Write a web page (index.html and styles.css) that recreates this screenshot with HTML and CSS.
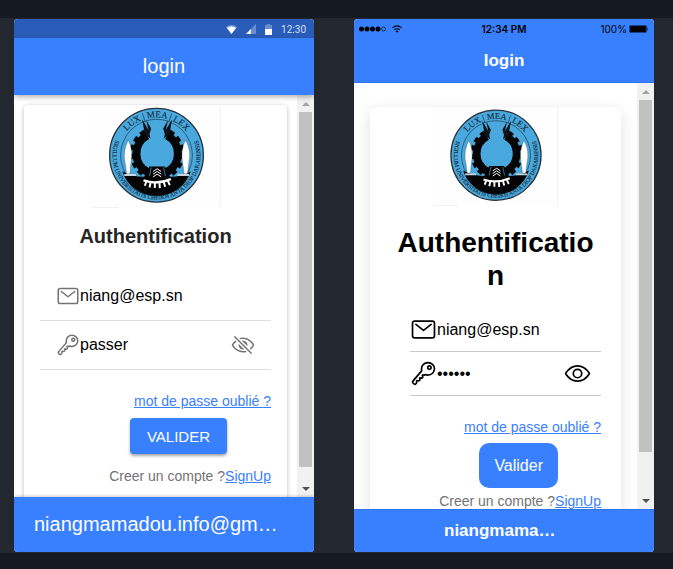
FILE: index.html
```html
<!DOCTYPE html>
<html lang="fr">
<head>
<meta charset="utf-8">
<meta name="viewport" content="width=device-width, initial-scale=1">
<title>login</title>
<link rel="stylesheet" href="styles.css">
</head>
<body>
<svg class="defs" aria-hidden="true">
  <defs>
    <path id="arc-top" d="M112 181A115 115 0 0 1 342 181"/>
    <path id="arc-bottom" d="M108 124A132 132 0 1 0 346 124"/>
    <symbol id="seal" viewBox="30 30 391 308">
      <rect x="30" y="30" width="391" height="308" fill="#fefefe"/>
      <path d="M420 30V337M30 337H110" fill="none" stroke="#f0f0f0" stroke-width="3"/>
      <circle cx="227" cy="180" r="141" fill="#49a9de" stroke="#26323c" stroke-width="4"/>
      <circle cx="227" cy="180" r="108" fill="#49a9de" stroke="#1d3442" stroke-width="2"/>
      <path d="M124 228Q150 244 190 245L206 214H252L268 245Q306 244 330 228A108 108 0 0 1 124 228Z" fill="#050505"/>
      <path d="M211 217L206 243M248 217L254 243" fill="none" stroke="#49a9de" stroke-width="2"/>
      <path d="M199 121A62 62 0 0 0 201 231M259 121A62 62 0 0 1 257 231" fill="none" stroke="#050505" stroke-width="24"/>
      <path d="M192 109A76 76 0 0 0 195 243M266 109A76 76 0 0 1 263 243" fill="none" stroke="#050505" stroke-width="13" stroke-dasharray="16 11"/>
      <path d="M184 72L203 104L209 130L192 118ZM196 74L211 100L206 117ZM274 72L255 104L249 130L266 118ZM262 74L247 100L252 117Z" fill="#101418"/>
      <path d="M142 134Q124 170 133 205L137 236H147L150 205Q158 165 142 134ZM314 134Q298 170 306 205L310 236H320L324 205Q333 165 314 134Z" fill="#fff" stroke="#35414a" stroke-width="1"/>
      <path d="M130 240H165M290 240H325" stroke="#c8d5da" stroke-width="6"/>
      <path d="M217 229L229 221L241 229M217 237L229 229L241 237M217 245L229 237L241 245" fill="none" stroke="#fff" stroke-width="3"/>
      <path d="M188 256Q229 270 270 252" fill="none" stroke="#fff" stroke-width="7"/>
      <path d="M196 260L192 272M209 264L206 277M222 264V279M236 264L237 279M249 261L253 275M261 257L267 270" stroke="#fff" stroke-width="6"/>
      <g fill="#13293a" stroke="#13293a" stroke-width=".4" font-family="Liberation Serif, serif">
        <text font-size="27" text-anchor="middle"><textPath href="#arc-top" startOffset="50%">LUX | MEA | LEX</textPath></text>
        <text font-size="18" text-anchor="middle"><textPath href="#arc-bottom" startOffset="50%">SIGILLUM UNIVERSITATIS CHEIKH ANTA DIOP DAKARENSIS</textPath></text>
      </g>
    </symbol>
    <symbol id="mail" viewBox="0 0 512 512">
      <g fill="none" stroke="currentColor" stroke-width="32" stroke-linecap="round" stroke-linejoin="round"><rect x="48" y="96" width="416" height="320" rx="40"/><path d="M112 160L256 272L400 160"/></g>
    </symbol>
    <symbol id="key" viewBox="0 0 512 512">
      <path fill="none" stroke="currentColor" stroke-width="32" stroke-linecap="round" stroke-linejoin="round" d="M218.1 167.17c0 13 0 25.6 4.1 37.4-43.1 50.6-156.9 184.3-167.5 194.5a20.17 20.17 0 00-6.7 15c0 8.5 5.2 16.7 9.6 21.3 6.6 6.9 34.8 33 40 28 15.4-15 18.5-19 24.8-25.2 9.5-9.3-1-28.3 2.3-36s6.8-9.2 12.5-10.4 15.8 2.9 23.7 3c8.3.1 12.8-3.4 19-9.2 5-4.6 8.6-8.9 8.7-15.6.2-9-12.8-20.9-3.1-30.4s23.7 6.2 34 5 22.8-15.5 24.1-21.6-11.7-21.8-9.7-30.7c.7-3 6.8-10 11.4-11s25 6.9 29.6 5.9c5.6-1.2 12.1-7.1 17.4-10.4 15.5 6.7 29.6 9.4 47.7 9.4 68.5 0 124-53.4 124-119.2S408.5 48 340 48s-121.9 53.37-121.9 119.17zM400 144a32 32 0 11-32-32 32 32 0 0132 32z"/>
    </symbol>
    <symbol id="eye" viewBox="0 0 512 512">
      <g fill="none" stroke="currentColor" stroke-width="32"><path d="M255.66 112c-77.94 0-157.89 45.11-220.83 135.33a16 16 0 00-.27 17.77C82.92 340.8 161.8 400 255.66 400c92.84 0 173.34-59.38 221.79-135.25a16.14 16.14 0 000-17.47C428.89 172.28 347.8 112 255.66 112z"/><circle cx="256" cy="256" r="80"/></g>
    </symbol>
    <symbol id="eye-off" viewBox="0 0 512 512">
      <path fill="currentColor" d="M432 448a15.92 15.92 0 01-11.31-4.69l-352-352a16 16 0 0122.62-22.62l352 352A16 16 0 01432 448zM255.66 384c-41.49 0-81.5-12.28-118.92-36.5-34.07-22-64.74-53.51-88.7-91v-.08c19.94-28.57 41.78-52.73 65.24-72.21a2 2 0 00.14-2.94L93.5 161.38a2 2 0 00-2.71-.12c-24.92 21-48.05 46.76-69.08 76.92a31.92 31.92 0 00-.64 35.54c26.41 41.33 60.4 76.14 98.28 100.65C162 402 207.9 416 255.66 416a239.13 239.13 0 0075.8-12.58 2 2 0 00.77-3.31l-21.58-21.58a4 4 0 00-3.83-1 204.8 204.8 0 01-51.16 6.47zM490.84 238.6c-26.46-40.92-60.79-75.68-99.27-100.53C349 110.55 302 96 255.66 96a227.34 227.34 0 00-74.89 12.83 2 2 0 00-.75 3.31l21.55 21.55a4 4 0 003.88 1 192.82 192.82 0 0150.21-6.69c40.69 0 80.58 12.43 118.55 37 34.71 22.4 65.74 53.88 89.76 91a.13.13 0 010 .16 310.72 310.72 0 01-64.12 72.73 2 2 0 00-.15 2.95l19.9 19.89a2 2 0 002.7.13 343.49 343.49 0 0068.64-78.48 32.2 32.2 0 00-.1-34.78zM256 160a95.88 95.88 0 00-21.37 2.4 2 2 0 00-1 3.38l112.59 112.56a2 2 0 003.38-1A96 96 0 00256 160zM165.78 233.66a2 2 0 00-3.38 1 96 96 0 00115 115 2 2 0 001-3.38z"/>
    </symbol>
  </defs>
</svg>

<main class="stage">
  <section class="phone android">
    <div class="status">
      <svg width="11" height="9" viewBox="0 0 11 9"><path d="M0 2Q5.5-2 11 2L5.500 9Z" fill="#fff" opacity=".4"/><path d="M1 3Q5.500 0 10 3L5.500 9Z" fill="#fff"/></svg>
      <svg width="10" height="10" viewBox="0 0 10 10"><path d="M0 10L10 0V10Z" fill="#fff" opacity=".3"/><path d="M0 10L5 5V10Z" fill="#fff"/></svg>
      <svg width="7" height="11" viewBox="0 0 7 11"><path d="M0 1H2V0H5V1H7V5H0Z" fill="#fff" opacity=".3"/><path d="M0 5H7V11H0Z" fill="#fff"/></svg>
      <span>12:30</span>
    </div>
    <header class="bar"><h1>login</h1></header>
    <div class="content">
      <div class="page">
        <form class="card">
          <svg class="seal" role="img" aria-label="Logo"><use href="#seal"/></svg>
          <h2>Authentification</h2>
          <div class="item">
            <label for="mail-a"><svg class="icon"><use href="#mail"/></svg></label>
            <input id="mail-a" type="text" aria-label="Email" value="niang@esp.sn">
          </div>
          <div class="item">
            <label for="pass-a"><svg class="icon"><use href="#key"/></svg></label>
            <input id="pass-a" type="text" aria-label="Mot de passe" value="passer">
            <button class="toggle" type="button" aria-label="Masquer"><svg class="icon"><use href="#eye-off"/></svg></button>
          </div>
          <p class="forgot"><a href="#">mot de passe oublié ?</a></p>
          <button class="submit" type="button">VALIDER</button>
          <p class="signup">Creer un compte ?<a href="#">SignUp</a></p>
        </form>
      </div>
      <div class="scroll" aria-hidden="true"><i class="up"></i><b></b><i class="down"></i></div>
    </div>
    <footer class="foot"><span>niangmamadou.info@gm…</span></footer>
  </section>

  <section class="phone ios">
    <div class="status">
      <div class="signal">
        <svg width="27" height="6" viewBox="0 0 27 6"><g fill="#000"><circle cx="2.500" cy="3" r="2.500"/><circle cx="8" cy="3" r="2.500"/><circle cx="13.500" cy="3" r="2.500"/><circle cx="19" cy="3" r="2.500"/></g><circle cx="24.500" cy="3" r="2" fill="none" stroke="#000" stroke-width=".6"/></svg>
        <svg width="10" height="8" viewBox="0 0 10 8"><g fill="none" stroke="#000" stroke-width="1.100"><path d="M.5 2.800Q5-1 9.500 2.800"/><path d="M2.300 4.800Q5 2.600 7.700 4.800"/></g><path d="M3.500 6Q5 5 6.500 6L5 7.700Z"/></svg>
      </div>
      <strong>12:34 PM</strong>
      <div class="power"><span>100%</span><svg width="20" height="8" viewBox="0 0 20 8"><rect x=".3" y=".3" width="17.400" height="7.400" rx="2" fill="none" stroke="#000" stroke-width=".6"/><rect x="1" y="1" width="16" height="6" rx="1"/><path d="M18.500 2.500Q20 4 18.500 5.500Z"/></svg></div>
    </div>
    <header class="bar"><h1>login</h1></header>
    <div class="content">
      <div class="page">
        <form class="card">
          <svg class="seal" role="img" aria-label="Logo"><use href="#seal"/></svg>
          <h2>Authentification</h2>
          <div class="item">
            <label for="mail-i"><svg class="icon"><use href="#mail"/></svg></label>
            <input id="mail-i" type="text" aria-label="Email" value="niang@esp.sn">
          </div>
          <div class="item">
            <label for="pass-i"><svg class="icon"><use href="#key"/></svg></label>
            <input id="pass-i" type="password" aria-label="Mot de passe" value="passer">
            <button class="toggle" type="button" aria-label="Afficher"><svg class="icon"><use href="#eye"/></svg></button>
          </div>
          <p class="forgot"><a href="#">mot de passe oublié ?</a></p>
          <button class="submit" type="button">Valider</button>
          <p class="signup">Creer un compte ?<a href="#">SignUp</a></p>
        </form>
      </div>
      <div class="scroll" aria-hidden="true"><i class="up"></i><b></b><i class="down"></i></div>
    </div>
    <footer class="foot"><span>niangmama…</span></footer>
  </section>
</main>
</body>
</html>
```
FILE: styles.css
```css
* {
  box-sizing: border-box;
}

body {
  margin: 0;
  height: 100vh;
  padding: 18px 0 16px;
  display: flex;
  flex-direction: column;
  background: #151920;
  font-family: "Liberation Sans", Arial, sans-serif;
}

h1, h2, p {
  margin: 0;
}

a {
  color: #3880ff;
}

svg {
  display: block;
  flex: none;
}

.defs {
  position: absolute;
  width: 0;
  height: 0;
}

.stage {
  flex: 1;
  min-height: 0;
  display: grid;
  grid-template-columns: 1fr 1fr;
  grid-template-rows: minmax(0, 1fr);
  gap: 40px;
  padding: 1px 19px 1px 14px;
  background: #232830;
}

.phone {
  min-width: 0;
  display: flex;
  flex-direction: column;
  overflow: hidden;
  border-radius: 4px;
  background: #fff;
}

.status {
  display: flex;
  align-items: center;
  background: #3880ff;
}

.android .status {
  height: 19px;
  justify-content: flex-end;
  gap: 9px;
  padding: 1px 8px 0 0;
  background: #295db9;
  color: #d4dff1;
  font: 10px Roboto, sans-serif;
}

.ios .status {
  height: 20px;
  display: grid;
  grid-template-columns: 1fr auto 1fr;
  padding: 0 5px;
  font: 10px Inter, sans-serif;
}

.ios .status strong {
  font-weight: 600;
}

.signal, .power {
  display: flex;
  align-items: center;
}

.signal {
  gap: 6px;
}

.power {
  justify-content: flex-end;
  gap: 2px;
}

.bar {
  z-index: 1;
  display: flex;
  align-items: center;
  justify-content: center;
  background: #3880ff;
  color: #fff;
}

.android .bar {
  height: 57px;
  box-shadow: 0 2px 5px rgba(0, 0, 0, .3);
}

.ios .bar {
  height: 44px;
  border-bottom: 1px solid #3273e6;
}

.android h1 {
  font: 20px "Liberation Sans", Arial, sans-serif;
}

.ios h1 {
  font-size: 17px;
}

.content {
  flex: 1;
  min-height: 0;
  display: flex;
  overflow: hidden;
}

.page {
  flex: 1;
  min-width: 0;
  overflow: hidden;
}

.card {
  display: flex;
  flex-direction: column;
  background: #fff;
  color: #737373;
  font-size: 14px;
  line-height: 20px;
}

.android .card {
  margin: 10px;
  padding: 0 16px 30px;
  border-radius: 4px;
  box-shadow: 0 1px 4px rgba(0, 0, 0, .28);
}

.ios .card {
  margin: 24px 16px;
  padding: 0 20px 30px;
  border-radius: 8px;
  box-shadow: 0 4px 16px rgba(0, 0, 0, .12);
}

.seal {
  align-self: center;
  width: 130px;
  height: 103px;
}

.ios .seal {
  width: 125px;
  height: 99px;
}

h2 {
  text-align: center;
  overflow-wrap: anywhere;
}

.android h2 {
  margin: 16px 0 24px;
  color: #262626;
  font-size: 20px;
  line-height: 24px;
}

.ios h2 {
  margin: 20px 0 16px;
  color: #000;
  font-size: 28px;
  line-height: 33px;
}

.item {
  display: flex;
  align-items: center;
  height: 49px;
  padding: 0 16px;
  border-bottom: 1px solid #dedede;
}

.ios .item {
  height: 44px;
  margin-left: 20px;
  padding: 0 10px 0 0;
  border-color: #c8c7cc;
}

.icon {
  width: 24px;
  height: 24px;
  color: #737373;
}

.ios .icon {
  width: 27px;
  height: 27px;
  color: #000;
}

.item input {
  flex: 1;
  min-width: 0;
  padding: 0;
  border: 0;
  outline: 0;
  background: none;
  color: #000;
  font: 16px "Liberation Sans", Arial, sans-serif;
}

.toggle {
  padding: 0;
  border: 0;
  background: none;
}

.forgot, .signup {
  text-align: right;
}

.forgot {
  margin-top: 21px;
}

.submit {
  align-self: flex-end;
  border: 0;
  background: #3880ff;
  color: #fff;
}

.android .submit {
  margin: 7px 44px 12px 0;
  height: 36px;
  padding: 0 17px;
  border-radius: 4px;
  box-shadow: 0 2px 3px rgba(0, 0, 0, .35);
  font: 15px "Liberation Sans", Arial, sans-serif;
}

.ios .submit {
  margin: 6px 43px 3px 0;
  height: 45px;
  padding: 0 15px;
  border-radius: 10px;
  font: 16px "Liberation Sans", Arial, sans-serif;
}

.scroll {
  flex: none;
  display: flex;
  flex-direction: column;
  align-items: center;
  width: 17px;
  background: #f1f1f1;
}

.scroll b {
  width: 13px;
  flex: 0 1 auto;
  background: #c1c1c1;
}

.android .scroll b {
  height: 355px;
}

.ios .scroll b {
  height: 352px;
}

.scroll i {
  flex: none;
  display: grid;
  place-items: center;
  width: 17px;
  height: 17px;
}

.scroll i::before {
  content: "";
  border: 4px solid transparent;
}

.scroll .up::before {
  border-top: 0;
  border-bottom-color: #a3a3a3;
}

.scroll .down {
  margin-top: auto;
}

.scroll .down::before {
  border-bottom: 0;
  border-top-color: #505050;
}

.foot {
  z-index: 1;
  display: flex;
  align-items: center;
  background: #3880ff;
  color: #fff;
}

.foot span {
  flex: 1;
  white-space: nowrap;
}

.android .foot {
  height: 55px;
  padding: 0 20px;
  box-shadow: 0 -1px 3px rgba(0, 0, 0, .2);
  font-size: 20px;
}

.ios .foot {
  height: 43px;
  padding: 0 90px;
  border-top: 1px solid #3273e6;
  font-size: 17px;
  font-weight: bold;
}
```
